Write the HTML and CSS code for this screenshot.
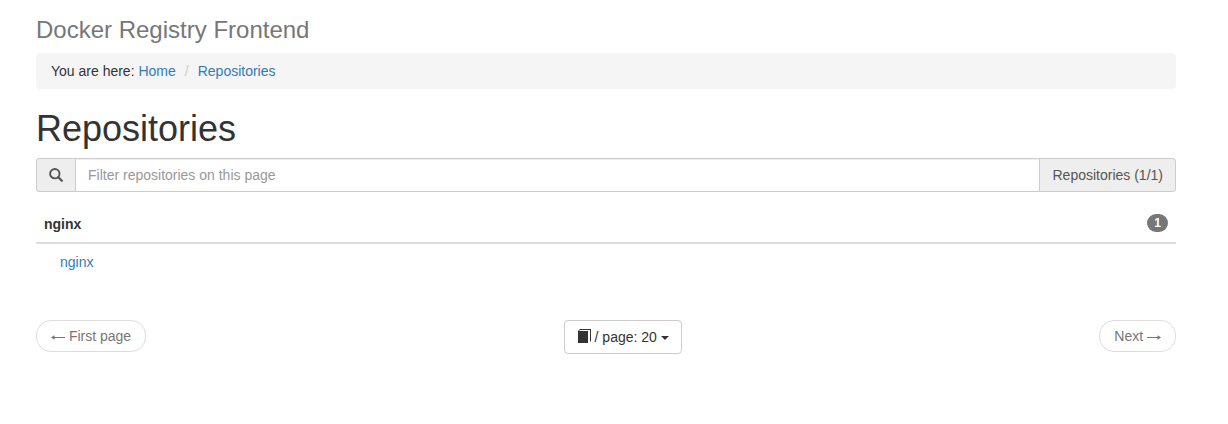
FILE: index.html
```html
<!DOCTYPE html>
<html lang="en">
<head>
    <meta charset="UTF-8">
    <meta name="viewport" content="width=device-width, initial-scale=1.0">
    <title>Docker Registry Frontend</title>
    <link rel="stylesheet" href="styles.css">
</head>
<body>
    <div class="container">
        <!-- Header -->
        <h3 class="site-title">Docker Registry Frontend</h3>
        <ol class="breadcrumb">
            <li>You are here: <a href="#">Home</a></li>
            <li><a href="#">Repositories</a></li>
        </ol>

        <h1 class="page-title">Repositories</h1>

        <!-- Filter -->
        <div class="input-group">
            <span class="addon addon-left">
                <svg class="icon-search" viewBox="0 0 14 14" width="14" height="14">
                    <circle cx="5.8" cy="5.7" r="4.700" fill="none" stroke="#555" stroke-width="1.9"/>
                    <path d="M9.300 9.200l3.500 3.500" stroke="#555" stroke-width="2.3" stroke-linecap="round"/>
                </svg>
            </span>
            <input type="text" class="form-control" placeholder="Filter repositories on this page">
            <span class="addon addon-right">Repositories (1/1)</span>
        </div>

        <!-- Repository list -->
        <table class="table">
            <thead>
                <tr>
                    <th>nginx <span class="badge">1</span></th>
                </tr>
            </thead>
            <tbody>
                <tr>
                    <td><a href="#">nginx</a></td>
                </tr>
            </tbody>
        </table>

        <!-- Pager -->
        <div class="pager">
            <a class="pager-link" href="#">
                <svg class="arrow" viewBox="0 0 14 7" width="14" height="7">
                    <path d="M1 3.500h13" stroke="#777"/>
                    <path d="M0 3.500L3.500 1.200V5.800z" fill="#777"/>
                </svg>
                First page
            </a>
            <button type="button" class="btn">
                <svg class="icon-book" viewBox="0 0 14 14" width="14" height="14">
                    <path d="M3 0h11v12l-1 1V1H3L2 2h9v12H1V2z" fill="#333"/>
                </svg>
                / page: 20 <span class="caret"></span>
            </button>
            <a class="pager-link" href="#">
                Next
                <svg class="arrow" viewBox="0 0 14 7" width="14" height="7">
                    <path d="M0 3.500h13" stroke="#777"/>
                    <path d="M14 3.500L10.500 1.200V5.800z" fill="#777"/>
                </svg>
            </a>
        </div>
    </div>
</body>
</html>
```

FILE: styles.css
```css
* {
    box-sizing: border-box;
}

body {
    margin: 0;
    background-color: #fff;
    color: #333;
    font-family: "Liberation Sans", Arial, sans-serif;
    font-size: 14px;
    line-height: 20px;
}

a {
    color: #337ab7;
    text-decoration: none;
}

.container {
    width: 1170px;
    margin-left: 21px;
    padding: 17px 15px 0;
}

/* Header */
.site-title,
.page-title {
    font-weight: 500;
}

.site-title {
    margin: 0 0 10px;
    color: #777;
    font-size: 24px;
    line-height: 26px;
}

.page-title {
    margin: 20px 0 10px;
    font-size: 36px;
    line-height: 39px;
}

.breadcrumb {
    display: flex;
    margin: 0;
    padding: 8px 15px;
    list-style: none;
    background-color: #f5f5f5;
    border-radius: 4px;
}

.breadcrumb li + li::before {
    content: "/";
    padding: 0 9px;
    color: #ccc;
}

/* Filter */
.input-group {
    display: flex;
    height: 34px;
}

.addon {
    display: flex;
    align-items: center;
    padding: 0 12px;
    color: #555;
    background-color: #eee;
    border: 1px solid #ccc;
}

.addon-left {
    border-right: 0;
    border-radius: 4px 0 0 4px;
}

.addon-right {
    padding-left: 12.6px;
    border-left: 0;
    border-radius: 0 4px 4px 0;
}

.form-control {
    flex: 1;
    padding: 6px 12px;
    color: #555;
    font: inherit;
    border: 1px solid #ccc;
    box-shadow: inset 0 1px 1px rgba(0, 0, 0, 0.075);
    outline: none;
}

.form-control::placeholder {
    color: #999;
}

/* Repository list */
.table {
    width: 100%;
    margin: 14px 0 40px;
    border-collapse: collapse;
}

.table th {
    padding: 8px;
    text-align: left;
    border-bottom: 2px solid #ddd;
}

.table td {
    padding: 8px 24px;
}

.badge {
    float: right;
    min-width: 10px;
    padding: 3px 7px;
    color: #fff;
    font-size: 12px;
    line-height: 12px;
    background-color: #777;
    border-radius: 10px;
}

/* Pager */
.pager {
    display: flex;
    justify-content: space-between;
    align-items: flex-start;
}

.pager-link {
    padding: 5px 14px;
    color: #777;
    border: 1px solid #ddd;
    border-radius: 15px;
}

.arrow {
    vertical-align: 0;
}

.btn {
    padding: 6px 12px;
    color: #333;
    font: inherit;
    background-color: #fff;
    border: 1px solid #ccc;
    border-radius: 4px;
}

.icon-book {
    vertical-align: -1px;
}

.caret {
    display: inline-block;
    vertical-align: middle;
    border-top: 4px solid #333;
    border-right: 4px solid transparent;
    border-left: 4px solid transparent;
}
```
